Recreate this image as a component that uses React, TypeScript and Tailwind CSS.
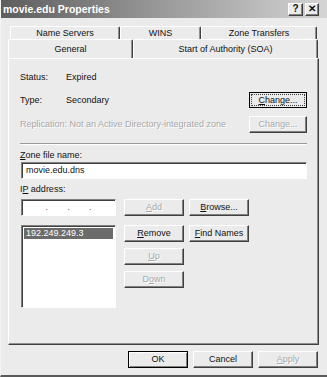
import React from "react";

const raised =
  "border border-t-white border-l-white border-r-[#404040] border-b-[#404040] shadow-[inset_-1px_-1px_0_#808080]";
const sunken =
  "border border-t-[#808080] border-l-[#808080] border-r-white border-b-white shadow-[inset_1px_1px_0_#404040]";

function Btn({
  children,
  w = "w-[60px]",
  disabled = false,
  className = "",
}: {
  children: React.ReactNode;
  w?: string;
  disabled?: boolean;
  className?: string;
}) {
  return (
    <div
      className={`${raised} ${w} h-[17px] flex items-center justify-center whitespace-nowrap bg-[#ebebeb] ${
        disabled ? "text-[#a8a8a8] [text-shadow:1px_1px_0_#fff]" : "text-[#111]"
      } ${className}`}
    >
      {children}
    </div>
  );
}

function Tab({ label, w, front = false }: { label: string; w: string; front?: boolean }) {
  return (
    <div
      className={`${w} ${front ? "h-[19px] pt-[1px]" : "h-[13px]"} flex items-center justify-center whitespace-nowrap border-t border-l border-t-white border-l-white border-r border-r-[#404040] shadow-[inset_-1px_0_0_#909090] rounded-tl-[2px] rounded-tr-[2px] bg-[#ebebeb]`}
    >
      {label}
    </div>
  );
}

export default function App() {
  return (
    <div
      className="w-[327px] h-[377px] bg-[#ebebeb] border-l border-l-[#f4f4f4] border-b-2 border-b-[#5a5a5a] flex flex-col text-[9px] leading-none text-[#111] overflow-hidden"
      style={{ fontFamily: '"Liberation Sans", Arial, sans-serif' }}
    >
      {/* Title bar */}
      <div className="h-[18px] bg-gradient-to-r from-[#5e5e5e] via-[#9a9a9a] to-[#d4d4d4] flex items-center pl-[2px] pr-[8px]">
        <span className="text-white font-bold text-[10.5px]">movie.edu Properties</span>
        <div className="ml-auto flex gap-[2px]">
          <div className={`${raised} w-[15px] h-[13px] flex items-center justify-center bg-[#ebebeb] font-bold text-[10px]`}>?</div>
          <div className={`${raised} w-[14px] h-[13px] flex items-center justify-center bg-[#ebebeb] font-bold text-[10px]`}>✕</div>
        </div>
      </div>

      {/* Tabs */}
      <div className="pl-[7px] pr-[8px] pt-[8px]">
        <div className="flex pl-[2px]">
          <Tab label="Name Servers" w="w-[110px]" />
          <Tab label="WINS" w="w-[81px]" />
          <Tab label="Zone Transfers" w="w-[116px]" />
        </div>
        <div className="flex">
          <Tab label="General" w="w-[125px]" front />
          <Tab label="Start of Authority (SOA)" w="w-[185px]" front />
        </div>

        {/* Panel */}
        <div className="h-[287px] border border-t-white border-l-white border-r-[#404040] border-b-[#404040] shadow-[inset_-1px_-1px_0_#909090] pl-[11px] pr-[11px] flex flex-col">
          <div className="mt-[10px] h-[16px] flex items-center">
            <span className="w-[46px]">Status:</span>
            <span>Expired</span>
          </div>
          <div className="mt-[7px] h-[16px] flex items-center">
            <span className="w-[46px]">Type:</span>
            <span>Secondary</span>
            <div className="ml-auto w-[58px] h-[16px] border border-black bg-[#ebebeb] p-[1px]">
              <div className="w-full h-full border border-dotted border-[#404040] flex items-center justify-center">
                <span>
                  <u>C</u>hange...
                </span>
              </div>
            </div>
          </div>
          <div className="mt-[8px] h-[16px] flex items-center">
            <span className="whitespace-nowrap text-[#a8a8a8] [text-shadow:1px_1px_0_#fff]">
              Replication: Not an Active Directory-integrated zone
            </span>
            <Btn w="w-[58px]" disabled className="ml-auto h-[16px]">
              <span>
                Chan<u>g</u>e...
              </span>
            </Btn>
          </div>
          <div className="mt-[11px] h-[2px] border-t border-t-[#9a9a9a] border-b border-b-white" />
          <div className="mt-[3px] h-[14px] flex items-center">
            <span>
              <u>Z</u>one file name:
            </span>
          </div>
          <div className={`${sunken} ml-[1px] h-[17px] bg-white flex items-center pl-[4px]`}>movie.edu.dns</div>
          <div className="mt-[3px] h-[14px] flex items-center">
            <span>
              I<u>P</u> address:
            </span>
          </div>
          <div className="mt-[3px] ml-[1px] flex">
            <div className={`${sunken} w-[95px] h-[17px] bg-white flex items-center justify-around px-[14px] text-[#555]`}>
              <span>.</span>
              <span>.</span>
              <span>.</span>
            </div>
            <Btn disabled className="ml-[8px]">
              <span>
                <u>A</u>dd
              </span>
            </Btn>
            <Btn className="ml-[5px]">
              <span>
                <u>B</u>rowse...
              </span>
            </Btn>
          </div>
          <div className="mt-[9px] ml-[1px] flex">
            <div className={`${sunken} w-[95px] h-[83px] bg-white p-[2px]`}>
              <div className="h-[11px] bg-[#6b6b6b] text-white flex items-center pl-[2px]">192.249.249.3</div>
            </div>
            <div className="ml-[8px] flex flex-col gap-[6px]">
              <Btn>
                <span>
                  <u>R</u>emove
                </span>
              </Btn>
              <Btn disabled>
                <span>
                  <u>U</u>p
                </span>
              </Btn>
              <Btn disabled>
                <span>
                  D<u>o</u>wn
                </span>
              </Btn>
            </div>
            <div className="ml-[5px]">
              <Btn>
                <span>
                  <u>F</u>ind Names
                </span>
              </Btn>
            </div>
          </div>
        </div>
      </div>

      {/* Footer */}
      <div className="mt-[6px] pr-[9px] flex justify-end gap-[5px]">
        <div className="w-[60px] h-[17px] border border-black bg-[#ebebeb] shadow-[inset_1px_1px_0_#fff,inset_-1px_-1px_0_#808080] flex items-center justify-center">
          OK
        </div>
        <Btn>Cancel</Btn>
        <Btn disabled>
          <span>
            <u>A</u>pply
          </span>
        </Btn>
      </div>
    </div>
  );
}
